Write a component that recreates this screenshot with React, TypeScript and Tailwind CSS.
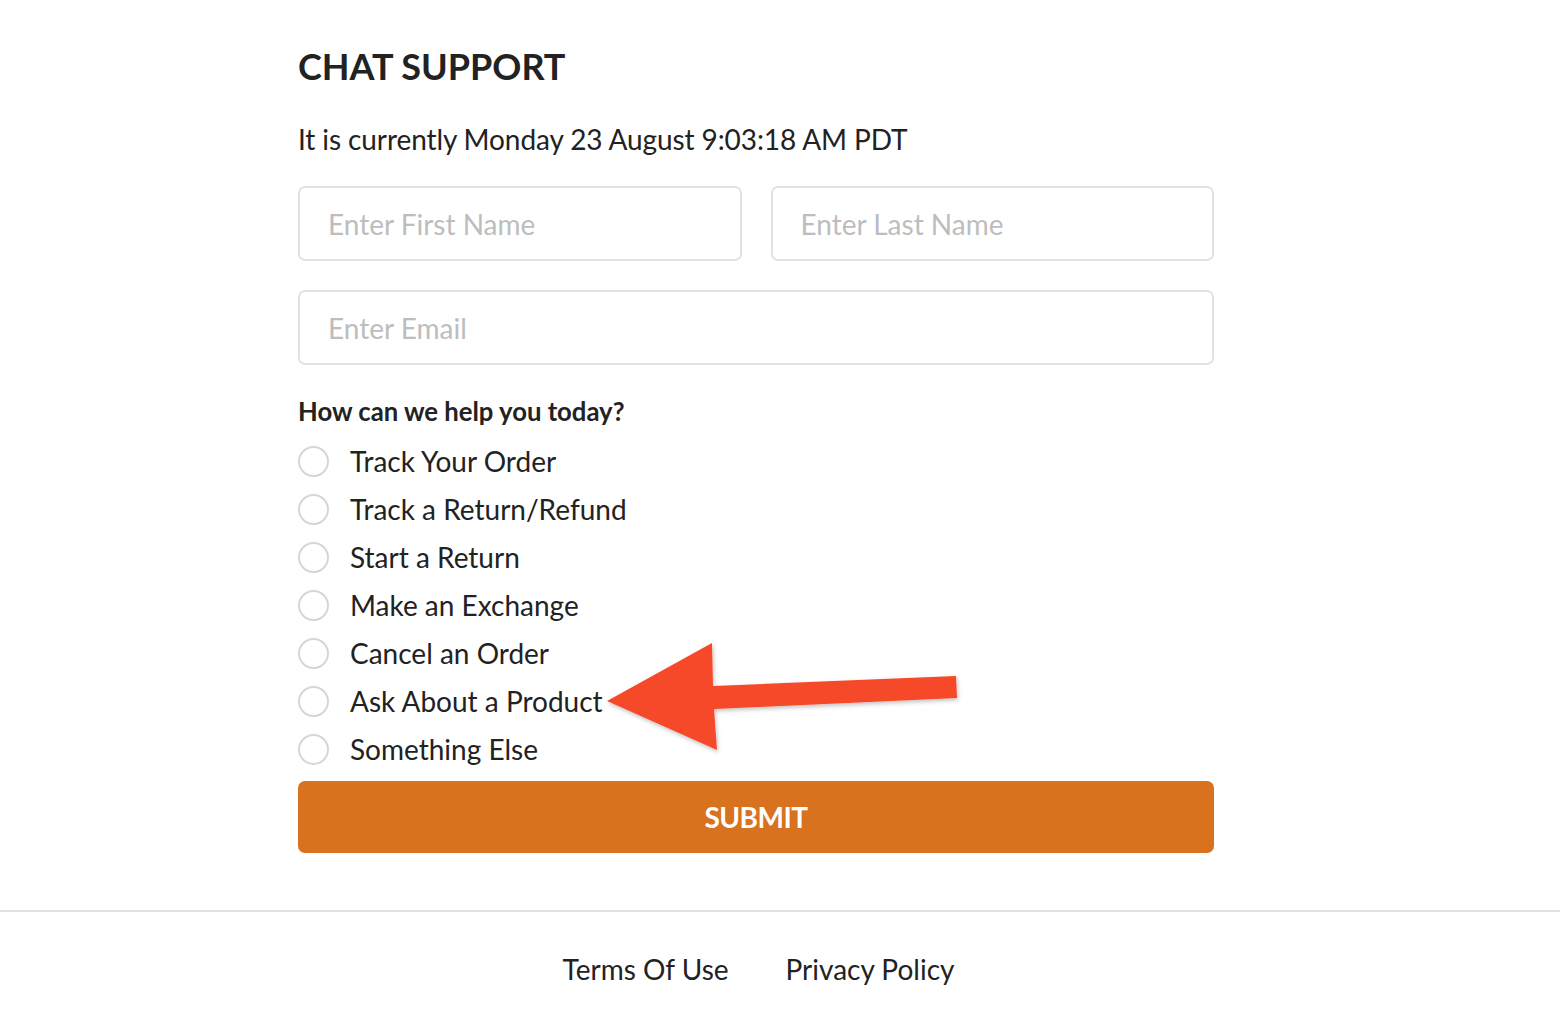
export default function App() {
  const options = [
    "Track Your Order",
    "Track a Return/Refund",
    "Start a Return",
    "Make an Exchange",
    "Cancel an Order",
    "Ask About a Product",
    "Something Else",
  ]

  return (
    <div className="relative min-h-[1018px] bg-white font-['Lato',sans-serif] text-[#222]">
      <div className="ml-[298px] w-[916px] pt-[42px]">
        <h1 className="text-[36px] font-bold leading-[48px]">CHAT SUPPORT</h1>
        <p className="mt-[31px] text-[28px] leading-[36px] tracking-[-0.1px]">It is currently Monday 23 August 9:03:18 AM PDT</p>

        <form className="mt-[29px]">
          <div className="grid grid-cols-2 gap-[29px]">
            <input
              type="text"
              placeholder="Enter First Name"
              className="h-[75px] rounded-[7px] border-2 border-[#e2e2e2] px-[28px] text-[28px] outline-none placeholder:text-[#bdbdbd]"
            />
            <input
              type="text"
              placeholder="Enter Last Name"
              className="h-[75px] rounded-[7px] border-2 border-[#e2e2e2] px-[28px] text-[28px] outline-none placeholder:text-[#bdbdbd]"
            />
          </div>
          <input
            type="email"
            placeholder="Enter Email"
            className="mt-[29px] h-[75px] w-full rounded-[7px] border-2 border-[#e2e2e2] px-[28px] text-[28px] outline-none placeholder:text-[#bdbdbd]"
          />

          <p className="mt-[30px] text-[25.7px] font-bold leading-[32px]">How can we help you today?</p>

          <div className="mt-[10px] flex flex-col">
            {options.map((label) => (
              <label key={label} className="flex h-[48px] items-center gap-[21px]">
                <span className="h-[31px] w-[31px] shrink-0 rounded-full border-2 border-[#d6d6d6] bg-white" />
                <span className="text-[28px] leading-none">{label}</span>
              </label>
            ))}
          </div>

          <button
            type="button"
            className="mt-[8px] h-[72px] w-full rounded-[7px] bg-[#d9721f] text-[28px] font-bold tracking-[-0.5px] text-white"
          >
            SUBMIT
          </button>
        </form>
      </div>

      <div className="mt-[57px] border-t-2 border-[#e0e0e0]">
        <div className="flex justify-center gap-[57px] pt-[37px] pr-[43px] text-[28px] leading-[40px]">
          <a>Terms Of Use</a>
          <a>Privacy Policy</a>
        </div>
      </div>

      <svg className="pointer-events-none absolute left-0 top-0" width="1560" height="1018">
        <defs>
          <filter id="sh" x="-10%" y="-20%" width="120%" height="140%">
            <feDropShadow dx="1" dy="2" stdDeviation="2" floodColor="#000" floodOpacity="0.25" />
          </filter>
        </defs>
        <polygon
          points="607,701 712,643 713,686 956,676 957,698 714,709 717,750"
          fill="#f64a2a"
          filter="url(#sh)"
        />
      </svg>
    </div>
  )
}
